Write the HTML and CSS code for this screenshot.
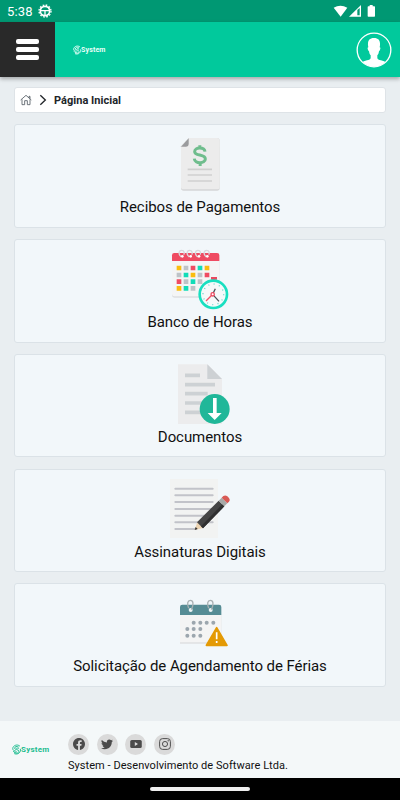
FILE: index.html
```
<!DOCTYPE html>
<html lang="pt-BR">
<head>
<meta charset="utf-8">
<title>Página Inicial</title>
<link rel="stylesheet" href="styles.css">
</head>
<body>
<svg class="defs" width="0" height="0">
  <symbol id="mark" viewBox="0 0 24 28">
    <g fill="none" stroke="currentColor" stroke-width="2.6">
      <path d="M21 5C14-1 3 3 2 11c0 6 4 6 8 7M18 8c-5-4-11-2-11 3 0 4 10 2 11 7 1 5-6 8-12 4M22 12c3 9-6 17-16 13M11 12c1-3 5-2 7 0M3 18c2 4 7 4 10 2"/>
    </g>
  </symbol>
</svg>
<div class="status">
  <span class="time">5:38</span>
  <svg class="gear" width="14" height="14" viewBox="0 0 42 42">
    <circle cx="21" cy="21" r="18" fill="none" stroke="#fff" stroke-width="4" stroke-dasharray="5 4.42"/>
    <circle cx="21" cy="21" r="14" fill="none" stroke="#fff" stroke-width="5"/>
    <path d="M8 20h26M21 20v14" stroke="#fff" stroke-width="4"/>
  </svg>
  <svg class="signals" width="44" height="14" viewBox="0 0 132 42">
    <path d="M2 11Q22-1 43 11L23 38z" fill="#fff"/>
    <path d="M48 38L84 3v35z" fill="#fff"/>
    <path d="M73 18L80 12v22h-7z" fill="#009873"/>
    <path d="M110 3h9v4h5q2 0 2 2v27q0 2-2 2h-18q-2 0-2-2V9q0-2 2-2h4z" fill="#fff"/>
  </svg>
</div>
<header class="header">
  <div class="menu"><i></i><i></i><i></i></div>
  <div class="brand"><svg width="8" height="10"><use href="#mark"/></svg><span>System</span></div>
  <svg class="avatar" width="36" height="36" viewBox="0 0 108 108">
    <clipPath id="round"><circle cx="54" cy="54" r="50"/></clipPath>
    <circle cx="54" cy="54" r="50.5" fill="none" stroke="#fff" stroke-width="4"/>
    <path clip-path="url(#round)" fill="#fff" d="M54 18c14 0 19 8 18 22l-1 6c4 0 2 9-2 12-1 6-2 9-5 12v8c0 7 20 7 28 14v16H16V92c8-7 28-7 28-14v-8c-3-3-4-6-5-12-4-3-6-12-2-12l-1-6c-1-14 4-22 18-22z"/>
  </svg>
</header>
<main class="content">
  <nav class="crumbs">
    <svg width="12" height="12" viewBox="0 0 36 36" fill="none" stroke="#59616a" stroke-width="2.6">
      <path d="M2 18L18 4l16 14M6 16v16h8V20h8v12h8V16M27 12V7h3v7"/>
    </svg>
    <svg class="chev" width="8" height="12" viewBox="0 0 24 36" fill="none" stroke="#212529" stroke-width="4"><path d="M4 4l15 14L4 32"/></svg>
    <span>Página Inicial</span>
  </nav>

  <a class="card">
    <svg width="100" height="70" viewBox="0 0 300 210">
      <path d="M116 39h85q8 0 8 8v142q0 8-8 8H101q-8 0-8-8V64z" fill="#d5d6d7"/>
      <path d="M116 39h85q8 0 8 8v138q0 8-8 8H101q-8 0-8-8V64z" fill="#ececec"/>
      <path d="M93 65l23-25v16q0 9-9 9z" fill="#9a9b9d"/>
      <path d="M165 80c-2-15-31-14-31 0 0 14 32 6 32 22 0 15-32 15-33-1M149.500 61v12M150.500 110v13" fill="none" stroke="#6fbd8d" stroke-width="9"/>
      <path d="M113 133h73M113 150h73M113 168h73" stroke="#cfcfcf" stroke-width="5"/>
    </svg>
    <span>Recibos de Pagamentos</span>
  </a>

  <a class="card">
    <svg width="100" height="70" viewBox="0 0 300 210">
      <path d="M66 52h142v114q0 7-7 7H73q-7 0-7-7z" fill="#dcdee0"/>
      <path d="M66 52h142v110q0 7-7 7H73q-7 0-7-7z" fill="#f4f5f5"/>
      <path d="M66 63V46q0-7 7-7h128q7 0 7 7v17z" fill="#ef4b62"/>
      <g fill="none" stroke="#d8d9dc" stroke-width="4"><path d="M94 51c-10-8-8-20 1-20 8 0 9 9 6 13M118 51c-10-8-8-20 1-20 8 0 9 9 6 13M143 51c-10-8-8-20 1-20 8 0 9 9 6 13M169 51c-10-8-8-20 1-20 8 0 9 9 6 13"/></g>
      <g fill="#fff"><circle cx="97" cy="49" r="4"/><circle cx="122" cy="49" r="4"/><circle cx="147" cy="49" r="4"/><circle cx="172" cy="49" r="4"/></g>
      <path fill="#f9bd0f" d="M80 77h14v14H80zM164 77h14v14h-14zM122 98h14v14h-14zM80 138h14v14H80z"/>
      <path fill="#bec3c7" d="M101 77h14v14h-14zM80 98h14v14H80zM143 98h14v14h-14zM101 118h14v14h-14zM143 118h14v14h-14zM122 138h14v14h-14z"/>
      <path fill="#ef4b62" d="M122 77h14v14h-14zM164 98h14v14h-14zM80 118h14v14H80z"/>
      <path fill="#12dcb8" d="M143 77h14v14h-14zM101 98h14v14h-14zM122 118h14v14h-14zM101 138h14v14h-14z"/>
      <path d="M183 111h18v8h-5v9h-9v-9h-4z" fill="#e94a60"/>
      <circle cx="190" cy="163" r="41" fill="#f6f9fa" stroke="#19dfc0" stroke-width="8"/>
      <circle cx="190" cy="163" r="31" fill="none" stroke="#67d9ca" stroke-width="4" stroke-dasharray="3 13.230"/>
      <path d="M188 163l8-17M188 163l19 21" stroke="#4d535b" stroke-width="4"/>
      <path d="M188 163l-20 20" stroke="#ef5368" stroke-width="4"/>
      <circle cx="188" cy="163" r="5" fill="#fff" stroke="#ef4b62" stroke-width="4"/>
    </svg>
    <span>Banco de Horas</span>
  </a>

  <a class="card">
    <svg width="100" height="70" viewBox="0 0 300 210">
      <path d="M84 28h88l44 44v135H84z" fill="#ececed"/>
      <path d="M172 28l44 44h-44z" fill="#cdd1d4"/>
      <path d="M105 61h45M105 89h90M105 116h68M105 144h50M105 172h50" stroke="#cdd1d4" stroke-width="11"/>
      <circle cx="194" cy="162" r="45" fill="#20b799"/>
      <path d="M189 129h11v45h15l-21 21-21-21h16z" fill="#fff"/>
    </svg>
    <span>Documentos</span>
  </a>

  <a class="card">
    <svg width="100" height="70" viewBox="0 0 300 210">
      <path d="M60 27h144v177H60z" fill="#f2f3f2"/>
      <path d="M76 56h112M76 76h112M76 96h112M76 117h112M76 137h112M76 157h112M76 177h62" stroke="#c2c3c9" stroke-width="6" stroke-linecap="round"/>
      <path d="M134 180l8-24 17 18z" fill="#ecd3b1"/>
      <path d="M134 180l3-9 6 6z" fill="#333"/>
      <path d="M141 157l65-65 17 17-64 66z" fill="#454545"/>
      <path d="M153 169l64-66 6 6-64 66z" fill="#303030"/>
      <path d="M206 92l9-9 17 17-9 9z" fill="#a7aaa8"/>
      <path d="M215 83l5-5q6-4 12 1l5 5q5 6 0 11l-5 5z" fill="#d85a55"/>
    </svg>
    <span>Assinaturas Digitais</span>
  </a>

  <a class="card">
    <svg width="100" height="70" viewBox="0 -18 300 210">
      <path d="M90 74h124v87H90z" fill="#dfe1e2"/>
      <path d="M90 74h124v83H90z" fill="#f4f4f4"/>
      <path d="M90 75V51q0-7 7-7h110q7 0 7 7v24z" fill="#568c94"/>
      <circle cx="122" cy="60" r="6" fill="#edf3f4"/><circle cx="182" cy="60" r="6" fill="#edf3f4"/>
      <path d="M116 55c-6-14-3-24 5-24 9 0 11 12 3 28M176 55c-6-14-3-24 5-24 9 0 11 12 3 28" fill="none" stroke="#a8b0b2" stroke-width="4"/>
      <g fill="#9ca6ae"><circle cx="131" cy="98" r="6"/><circle cx="151" cy="98" r="6"/><circle cx="170" cy="98" r="6"/><circle cx="190" cy="98" r="6"/><circle cx="112" cy="117" r="6"/><circle cx="131" cy="117" r="6"/><circle cx="151" cy="117" r="6"/><circle cx="112" cy="137" r="6"/><circle cx="131" cy="137" r="6"/><circle cx="151" cy="137" r="6"/></g>
      <path d="M200 113l31 53h-62z" fill="#e49a05" stroke="#e49a05" stroke-width="5" stroke-linejoin="round"/>
      <path d="M200 127v21M200 153v6" stroke="#fff" stroke-width="5"/>
    </svg>
    <span>Solicitação de Agendamento de Férias</span>
  </a>
</main>
<footer class="footer">
  <div class="brand green"><svg width="9" height="11"><use href="#mark"/></svg><span>System</span></div>
  <div class="about">
    <div class="social">
      <i><svg width="12" height="12" viewBox="0 0 16 16"><path fill="#4b4b4b" d="M16 8.050C16 3.600 12.420 0 8 0S0 3.600 0 8.050c0 4.020 2.930 7.350 6.750 7.950v-5.620H4.720V8.050h2.030V6.280c0-2.020 1.200-3.130 3.020-3.130.88 0 1.790.16 1.790.16v1.980h-1c-1 0-1.310.62-1.310 1.260v1.500h2.220l-.35 2.330H9.250V16C13.070 15.400 16 12.070 16 8.050z"/></svg></i>
      <i><svg width="12" height="12" viewBox="0 0 16 16"><path fill="#4b4b4b" d="M5.030 15c6.030 0 9.340-5 9.340-9.340v-.42A6.700 6.700 0 0 0 16 3.540a6.600 6.600 0 0 1-1.890.52 3.300 3.300 0 0 0 1.450-1.820 6.500 6.500 0 0 1-2.090.79A3.290 3.290 0 0 0 7.880 6.030 9.300 9.300 0 0 1 1.110 2.600a3.290 3.290 0 0 0 1.020 4.380 3.300 3.300 0 0 1-1.490-.41v.04a3.290 3.290 0 0 0 2.630 3.220 3.200 3.200 0 0 1-.86.12 3 3 0 0 1-.62-.06 3.290 3.290 0 0 0 3.070 2.280A6.600 6.600 0 0 1 0 13.530 9.300 9.300 0 0 0 5.030 15z"/></svg></i>
      <i><svg width="12" height="12" viewBox="0 0 16 16"><rect y="2.700" x=".3" width="15.400" height="10.600" rx="2" fill="#4b4b4b"/><path d="M6.400 5.400l4.300 2.600-4.300 2.600z" fill="#dadada"/></svg></i>
      <i><svg width="12" height="12" viewBox="0 0 16 16" fill="none" stroke="#4b4b4b" stroke-width="1.300"><rect x=".8" y=".8" width="14.400" height="14.400" rx="4"/><circle cx="8" cy="8" r="3.400"/><circle cx="12.200" cy="3.800" r=".4"/></svg></i>
    </div>
    <div class="company">System - Desenvolvimento de Software Ltda.</div>
  </div>
</footer>
<div class="navbar"><i></i></div>
</body>
</html>
```
FILE: styles.css
```
* { box-sizing: border-box; }
body { margin: 0; width: 400px; height: 800px; overflow: hidden; display: flex; flex-direction: column; background: #e9eef1; font-family: Roboto, sans-serif; color: #111; }
svg { display: block; flex: none; }
.defs { position: absolute; }
.status { height: 22px; flex: none; background: #009873; display: flex; align-items: center; padding: 0 23px 0 7px; color: #fff; }
.time { font-size: 13px; width: 31px; letter-spacing: .15px; white-space: nowrap; }
.signals { margin-left: auto; }
.header { height: 55px; flex: none; background: #01c99c; display: flex; align-items: center; padding-right: 8.500px; box-shadow: 0 2px 4px rgba(0,0,0,.3); }
.menu { width: 55px; height: 55px; background: #292929; display: flex; flex-direction: column; align-items: center; justify-content: center; gap: 3px; }
.menu i { width: 23px; height: 5px; border-radius: 2px; background: #fff; }
.brand { display: flex; align-items: center; color: #e8fff8; font-weight: 700; font-size: 7px; letter-spacing: .15px; }
.header .brand { margin-left: 18px; }
.avatar { margin-left: auto; }
.content { flex: 1; padding: 10px 14px 0; display: flex; flex-direction: column; gap: 11.200px; }
.crumbs { height: 26px; flex: none; background: #fff; border: 1px solid #dee3e7; border-radius: 3px; display: flex; align-items: center; padding-left: 5px; font-size: 11px; font-weight: 700; color: #212529; letter-spacing: .03px; }
.chev { margin: 0 7px; }
.card { height: 103.600px; flex: none; background: #f2f7fa; border: 1px solid #dbe2e7; border-radius: 3px; display: flex; flex-direction: column; align-items: center; font-size: 15px; line-height: 25px; letter-spacing: -.07px; white-space: nowrap; }
.footer { height: 57px; flex: none; background: #f4f8f9; display: flex; padding: 12.500px 0 0 12px; }
.green { color: #1fbd91; font-size: 8px; letter-spacing: .25px; width: 56px; height: 32px; }
.social { display: flex; gap: 7.700px; }
.social i { width: 21px; height: 21px; border-radius: 50%; background: #dadada; display: flex; align-items: center; justify-content: center; }
.company { font-size: 11px; line-height: 16px; margin-top: 3px; letter-spacing: .05px; white-space: nowrap; }
.navbar { height: 22px; flex: none; background: #000; display: flex; align-items: center; justify-content: center; }
.navbar i { width: 100px; height: 4px; border-radius: 2px; background: #eee; }
```
